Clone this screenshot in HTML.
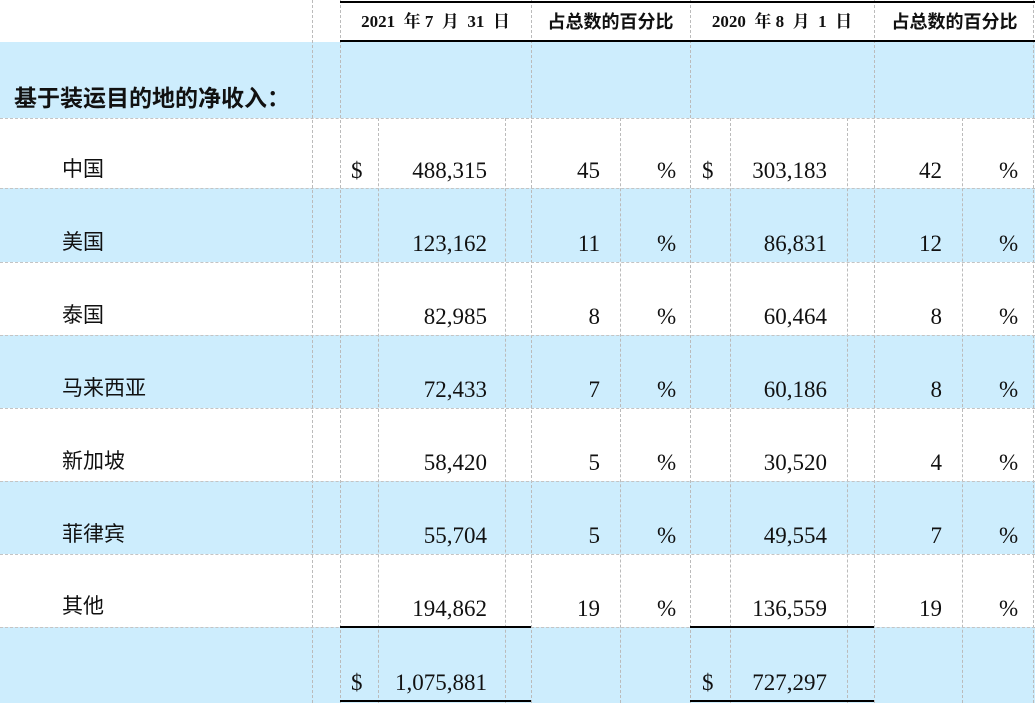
<!DOCTYPE html>
<html><head><meta charset="utf-8"><style>
html,body{margin:0;width:1035px;height:703px;overflow:hidden}
body{background:#fff;position:relative;font-family:"Liberation Serif","Noto Serif CJK SC",serif;color:#111}
.b{position:absolute;left:0;width:1035px;background:#cdedfd}
.v{position:absolute;bottom:0;border-left:1px dashed #bbb}
.h{position:absolute;left:0;width:1035px;border-top:1px dashed #c4c4c4}
.k{position:absolute;height:2px;background:#000}
.t{position:absolute;font-size:23px;line-height:26px;white-space:nowrap}
.r{text-align:right}
.c{font-family:"Liberation Sans","Noto Sans CJK SC",sans-serif;font-size:21px}
.hd{position:absolute;top:10px;font-weight:bold;font-size:17px;line-height:24px;text-align:center;white-space:nowrap}
.hd.c{font-size:18px}
</style></head><body>
<div class="b" style="top:42px;height:76px"></div>
<div class="b" style="top:188px;height:74px"></div>
<div class="b" style="top:335px;height:73px"></div>
<div class="b" style="top:481px;height:73px"></div>
<div class="b" style="top:627px;height:76px"></div>

<div class="v" style="left:312px;top:0"></div><div class="v" style="left:340px;top:0"></div>
<div class="v" style="left:378px;top:118px"></div><div class="v" style="left:505px;top:118px"></div>
<div class="v" style="left:531px;top:0"></div><div class="v" style="left:620px;top:118px"></div>
<div class="v" style="left:690px;top:0"></div><div class="v" style="left:730px;top:118px"></div>
<div class="v" style="left:847px;top:118px"></div><div class="v" style="left:874px;top:0"></div>
<div class="v" style="left:962px;top:118px"></div><div class="v" style="left:1033px;top:0"></div>

<div class="h" style="top:118px"></div><div class="h" style="top:188px"></div>
<div class="h" style="top:262px"></div><div class="h" style="top:335px"></div>
<div class="h" style="top:408px"></div><div class="h" style="top:481px"></div>
<div class="h" style="top:554px"></div><div class="h" style="top:627px"></div>

<div class="k" style="left:340px;width:695px;top:1px"></div>
<div class="k" style="left:340px;width:695px;top:40px"></div>
<div class="k" style="left:340px;width:191px;top:626px"></div>
<div class="k" style="left:690px;width:184px;top:626px"></div>
<div class="k" style="left:340px;width:191px;top:700px"></div>
<div class="k" style="left:690px;width:184px;top:700px"></div>

<div class="hd" style="left:340px;width:191px">2021&nbsp; 年 7&nbsp; 月&nbsp; 31&nbsp; 日</div>
<div class="hd c" style="left:531px;width:159px">占总数的百分比</div>
<div class="hd" style="left:690px;width:184px">2020&nbsp; 年 8&nbsp; 月&nbsp; 1&nbsp; 日</div>
<div class="hd c" style="left:874px;width:161px">占总数的百分比</div>

<div class="t c" style="left:14px;top:85px;font-weight:bold;font-size:23px">基于装运目的地的净收入：</div>

<div class="t c" style="left:62px;top:157px">中国</div>
<div class="t" style="left:351px;top:158px">$</div>
<div class="t r" style="left:378px;width:109px;top:158px">488,315</div>
<div class="t r" style="left:531px;width:69px;top:158px">45</div>
<div class="t" style="left:657px;top:158px">%</div>
<div class="t" style="left:702px;top:158px">$</div>
<div class="t r" style="left:730px;width:97px;top:158px">303,183</div>
<div class="t r" style="left:874px;width:68px;top:158px">42</div>
<div class="t" style="left:999px;top:158px">%</div>

<div class="t c" style="left:62px;top:230px">美国</div>
<div class="t r" style="left:378px;width:109px;top:231px">123,162</div>
<div class="t r" style="left:531px;width:69px;top:231px">11</div>
<div class="t" style="left:657px;top:231px">%</div>
<div class="t r" style="left:730px;width:97px;top:231px">86,831</div>
<div class="t r" style="left:874px;width:68px;top:231px">12</div>
<div class="t" style="left:999px;top:231px">%</div>

<div class="t c" style="left:62px;top:303px">泰国</div>
<div class="t r" style="left:378px;width:109px;top:304px">82,985</div>
<div class="t r" style="left:531px;width:69px;top:304px">8</div>
<div class="t" style="left:657px;top:304px">%</div>
<div class="t r" style="left:730px;width:97px;top:304px">60,464</div>
<div class="t r" style="left:874px;width:68px;top:304px">8</div>
<div class="t" style="left:999px;top:304px">%</div>

<div class="t c" style="left:62px;top:376px">马来西亚</div>
<div class="t r" style="left:378px;width:109px;top:377px">72,433</div>
<div class="t r" style="left:531px;width:69px;top:377px">7</div>
<div class="t" style="left:657px;top:377px">%</div>
<div class="t r" style="left:730px;width:97px;top:377px">60,186</div>
<div class="t r" style="left:874px;width:68px;top:377px">8</div>
<div class="t" style="left:999px;top:377px">%</div>

<div class="t c" style="left:62px;top:449px">新加坡</div>
<div class="t r" style="left:378px;width:109px;top:450px">58,420</div>
<div class="t r" style="left:531px;width:69px;top:450px">5</div>
<div class="t" style="left:657px;top:450px">%</div>
<div class="t r" style="left:730px;width:97px;top:450px">30,520</div>
<div class="t r" style="left:874px;width:68px;top:450px">4</div>
<div class="t" style="left:999px;top:450px">%</div>

<div class="t c" style="left:62px;top:522px">菲律宾</div>
<div class="t r" style="left:378px;width:109px;top:523px">55,704</div>
<div class="t r" style="left:531px;width:69px;top:523px">5</div>
<div class="t" style="left:657px;top:523px">%</div>
<div class="t r" style="left:730px;width:97px;top:523px">49,554</div>
<div class="t r" style="left:874px;width:68px;top:523px">7</div>
<div class="t" style="left:999px;top:523px">%</div>

<div class="t c" style="left:62px;top:594px">其他</div>
<div class="t r" style="left:378px;width:109px;top:596px">194,862</div>
<div class="t r" style="left:531px;width:69px;top:596px">19</div>
<div class="t" style="left:657px;top:596px">%</div>
<div class="t r" style="left:730px;width:97px;top:596px">136,559</div>
<div class="t r" style="left:874px;width:68px;top:596px">19</div>
<div class="t" style="left:999px;top:596px">%</div>

<div class="t" style="left:351px;top:670px">$</div>
<div class="t r" style="left:378px;width:109px;top:670px">1,075,881</div>
<div class="t" style="left:702px;top:670px">$</div>
<div class="t r" style="left:730px;width:97px;top:670px">727,297</div>
</body></html>
